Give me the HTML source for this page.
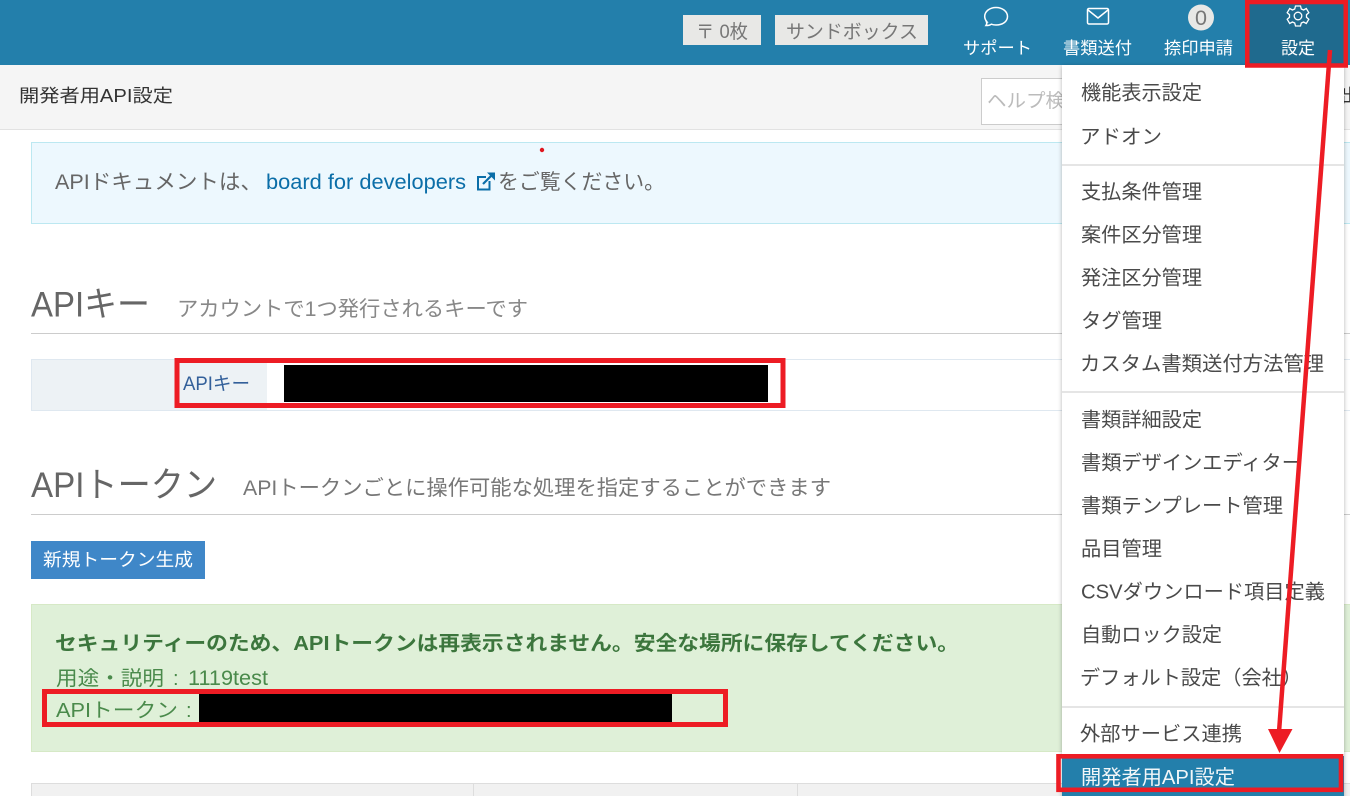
<!DOCTYPE html>
<html lang="ja"><head><meta charset="utf-8"><title>開発者用API設定</title>
<style>
html,body{margin:0;padding:0;width:1350px;height:796px;overflow:hidden;background:#fff}
svg{display:block}
text{font-family:"Liberation Sans","Noto Sans CJK JP",sans-serif;font-size:20px;fill:#555}
.m{font-size:20px;fill:#4a4a4a}
</style></head><body>
<svg width="1350" height="796" viewBox="0 0 1350 796" xmlns="http://www.w3.org/2000/svg">
<defs><filter id="s" x="-5%" y="-2%" width="110%" height="104%"><feDropShadow dx="0" dy="1" stdDeviation="2" flood-color="#000" flood-opacity=".3"/></filter></defs>
<rect width="1350" height="796" fill="#fff"/>
<!-- header -->
<rect width="1350" height="65" fill="#237fab"/>
<rect x="683" y="15" width="78" height="30" fill="#e8e8e6"/>
<text x="696" y="38" style="font-size:19px;fill:#777" textLength="52" lengthAdjust="spacingAndGlyphs">〒 0枚</text>
<rect x="775" y="15" width="153" height="30" fill="#e8e8e6"/>
<text x="786" y="38" style="font-size:19px;fill:#777" textLength="132" lengthAdjust="spacingAndGlyphs">サンドボックス</text>
<path d="M987 22c-1.500-1.800-2.300-3.400-2.300-5.500 0-5 4.800-9 11.300-9s11.500 4 11.500 9-4.800 8.500-11.500 8.500c-1.800 0-3.300-.3-4.700-.8-1.500 1-3.300 1.300-5.300 1.300 .8-1.100 1-2.300 .5-3.500z" fill="none" stroke="#fff" stroke-width="1.500"/>
<rect x="1087.500" y="8.500" width="21" height="15.500" rx="1.500" fill="none" stroke="#fff" stroke-width="1.500"/>
<path d="M1088 10l10 8 10-8" fill="none" stroke="#fff" stroke-width="1.500"/>
<circle cx="1201" cy="17.500" r="13" fill="#e8e8e6"/>
<text x="1195" y="25" style="font-size:21px;fill:#777" textLength="12" lengthAdjust="spacingAndGlyphs">0</text>
<text x="963" y="54" style="font-size:17px;fill:#fff" textLength="69" lengthAdjust="spacingAndGlyphs">サポート</text>
<text x="1063" y="54" style="font-size:17px;fill:#fff" textLength="69" lengthAdjust="spacingAndGlyphs">書類送付</text>
<text x="1164" y="54" style="font-size:17px;fill:#fff" textLength="69" lengthAdjust="spacingAndGlyphs">捺印申請</text>
<rect x="1247" y="0" width="99" height="65" fill="#1f6a8e"/>
<g fill="none" stroke="#fff" stroke-width="1.300" transform="translate(1298 16)">
<circle r="3.800"/>
<path d="M-2.500-10h5l.8 3 2.300 1 2.700-1.500 2.500 4.200-2.300 2v2.600l2.300 2-2.500 4.200-2.700-1.500-2.300 1-.8 3h-5l-.8-3-2.300-1-2.700 1.500-2.500-4.200 2.300-2v-2.600l-2.300-2 2.500-4.200 2.700 1.500 2.300-1z"/>
</g>
<text x="1281" y="54" style="font-size:17px;fill:#fff" textLength="34" lengthAdjust="spacingAndGlyphs">設定</text>
<!-- sub bar -->
<rect y="65" width="1350" height="64" fill="#f5f5f5"/>
<rect y="129" width="1350" height="1" fill="#e2e2e2"/>
<text x="19" y="102" style="font-size:18px;fill:#333" textLength="154" lengthAdjust="spacingAndGlyphs">開発者用API設定</text>
<rect x="981.500" y="78.500" width="90" height="46" fill="#fff" stroke="#ccc"/>
<text x="987" y="107" style="font-size:19px;fill:#bbb" textLength="78" lengthAdjust="spacingAndGlyphs">ヘルプ検</text>
<text x="1341" y="102" style="font-size:18px;fill:#333">出</text>
<!-- info -->
<rect x="31.500" y="142.500" width="1330" height="81" fill="#edf8fe" stroke="#bce8f1"/>
<circle cx="542" cy="150" r="2.200" fill="#e0161e"/>
<text x="55" y="189" style="font-size:21px;fill:#666" textLength="207" lengthAdjust="spacingAndGlyphs">APIドキュメントは、</text>
<text x="266" y="189" style="font-size:21px;fill:#0b6ea8" textLength="200" lengthAdjust="spacingAndGlyphs">board for developers</text>
<path d="M489.500 181v8.500h-11.500v-12.500h8" fill="none" stroke="#0b6ea8" stroke-width="2"/>
<path d="M483 184l9-9" fill="none" stroke="#0b6ea8" stroke-width="2.200"/>
<path d="M487 172.500h8v8z" fill="#0b6ea8"/>
<text x="498" y="189" style="font-size:21px;fill:#666" textLength="167" lengthAdjust="spacingAndGlyphs">をご覧ください。</text>
<!-- API key -->
<text x="31" y="316.500" style="font-size:35px;fill:#666" textLength="119" lengthAdjust="spacingAndGlyphs">APIキー</text>
<text x="177" y="316" style="font-size:21px;fill:#888" textLength="351" lengthAdjust="spacingAndGlyphs">アカウントで1つ発行されるキーです</text>
<rect x="31" y="333" width="1319" height="1" fill="#ccc"/>
<rect x="31.500" y="359.500" width="1330" height="51" fill="#fff" stroke="#dfe8f0"/>
<rect x="32" y="360" width="235" height="50" fill="#edf2f5"/>
<text x="183" y="390" style="font-size:19px;fill:#33609a" textLength="67" lengthAdjust="spacingAndGlyphs">APIキー</text>
<rect x="284" y="365" width="484" height="37" fill="#000"/>
<rect x="177" y="360.500" width="606" height="45" fill="none" stroke="#ed1c24" stroke-width="5"/>
<!-- API token -->
<text x="31" y="497" style="font-size:35px;fill:#666" textLength="186" lengthAdjust="spacingAndGlyphs">APIトークン</text>
<text x="243" y="495" style="font-size:21px;fill:#777" textLength="588" lengthAdjust="spacingAndGlyphs">APIトークンごとに操作可能な処理を指定することができます</text>
<rect x="31" y="514" width="1319" height="1" fill="#ccc"/>
<rect x="31" y="541" width="174" height="38" fill="#3f87c8"/>
<text x="43" y="566" style="font-size:18px;fill:#fff" textLength="150" lengthAdjust="spacingAndGlyphs">新規トークン生成</text>
<rect x="31.500" y="604.500" width="1330" height="147" fill="#dff0d8" stroke="#d6e9c6"/>
<text x="55" y="650" style="font-size:20px;font-weight:700;fill:#3c763d" textLength="904" lengthAdjust="spacingAndGlyphs">セキュリティーのため、APIトークンは再表示されません。安全な場所に保存してください。</text>
<text x="56" y="685" style="font-size:20px;fill:#4a8a4b" textLength="108" lengthAdjust="spacingAndGlyphs">用途・説明</text>
<text x="173" y="685" style="font-size:20px;fill:#4a8a4b">:</text>
<text x="188" y="685" style="font-size:21px;fill:#4a8a4b" textLength="80" lengthAdjust="spacingAndGlyphs">1119test</text>
<text x="56" y="717" style="font-size:20px;fill:#4a8a4b" textLength="122" lengthAdjust="spacingAndGlyphs">APIトークン</text>
<text x="186" y="717" style="font-size:20px;fill:#4a8a4b">:</text>
<rect x="44.500" y="691.500" width="681" height="33" fill="none" stroke="#ed1c24" stroke-width="5"/>
<rect x="199" y="694" width="473" height="28" fill="#000"/>
<!-- table -->
<rect x="31.500" y="783.500" width="1330" height="20" fill="#f1f1f1" stroke="#ddd"/>
<rect x="473" y="784" width="1" height="12" fill="#ddd"/>
<rect x="797" y="784" width="1" height="12" fill="#ddd"/>
<!-- menu -->
<rect x="1062" y="65" width="282" height="740" fill="#fff" filter="url(#s)"/>
<text class="m" x="1081" y="99.500" textLength="121" lengthAdjust="spacingAndGlyphs">機能表示設定</text>
<text class="m" x="1080" y="143.500" textLength="82" lengthAdjust="spacingAndGlyphs">アドオン</text>
<rect x="1062" y="164" width="282" height="2" fill="#e5e5e5"/>
<text class="m" x="1081" y="198.500" textLength="121" lengthAdjust="spacingAndGlyphs">支払条件管理</text>
<text class="m" x="1081" y="241.500" textLength="121" lengthAdjust="spacingAndGlyphs">案件区分管理</text>
<text class="m" x="1081" y="284.500" textLength="121" lengthAdjust="spacingAndGlyphs">発注区分管理</text>
<text class="m" x="1081" y="327.500" textLength="81" lengthAdjust="spacingAndGlyphs">タグ管理</text>
<text class="m" x="1080" y="370.500" textLength="244" lengthAdjust="spacingAndGlyphs">カスタム書類送付方法管理</text>
<rect x="1062" y="391" width="282" height="2" fill="#e5e5e5"/>
<text class="m" x="1081" y="426.500" textLength="121" lengthAdjust="spacingAndGlyphs">書類詳細設定</text>
<text class="m" x="1081" y="469.500" textLength="221" lengthAdjust="spacingAndGlyphs">書類デザインエディター</text>
<text class="m" x="1081" y="512.500" textLength="202" lengthAdjust="spacingAndGlyphs">書類テンプレート管理</text>
<text class="m" x="1081" y="555.500" textLength="81" lengthAdjust="spacingAndGlyphs">品目管理</text>
<text class="m" x="1081" y="598.500" textLength="244" lengthAdjust="spacingAndGlyphs">CSVダウンロード項目定義</text>
<text class="m" x="1081" y="641.500" textLength="141" lengthAdjust="spacingAndGlyphs">自動ロック設定</text>
<text class="m" x="1080" y="684.500" textLength="222" lengthAdjust="spacingAndGlyphs">デフォルト設定（会社）</text>
<rect x="1062" y="706" width="282" height="2" fill="#e5e5e5"/>
<text class="m" x="1080" y="740.500" textLength="162" lengthAdjust="spacingAndGlyphs">外部サービス連携</text>
<rect x="1062" y="756" width="282" height="40" fill="#237fab"/>
<text x="1081" y="784" style="font-size:20px;fill:#f2f6f8" textLength="154" lengthAdjust="spacingAndGlyphs">開発者用API設定</text>
<!-- annotations -->
<rect x="1247.250" y="2" width="98.500" height="63.500" fill="none" stroke="#ed1c24" stroke-width="4.500"/>
<rect x="1058.500" y="756.300" width="282.500" height="33.500" fill="none" stroke="#ed1c24" stroke-width="4.600"/>
<path d="M1330 50L1279 732" stroke="#ed1c24" stroke-width="4.500" fill="none"/>
<path d="M1268 729h24.500l-13 24z" fill="#ed1c24"/>
</svg>
</body></html>
